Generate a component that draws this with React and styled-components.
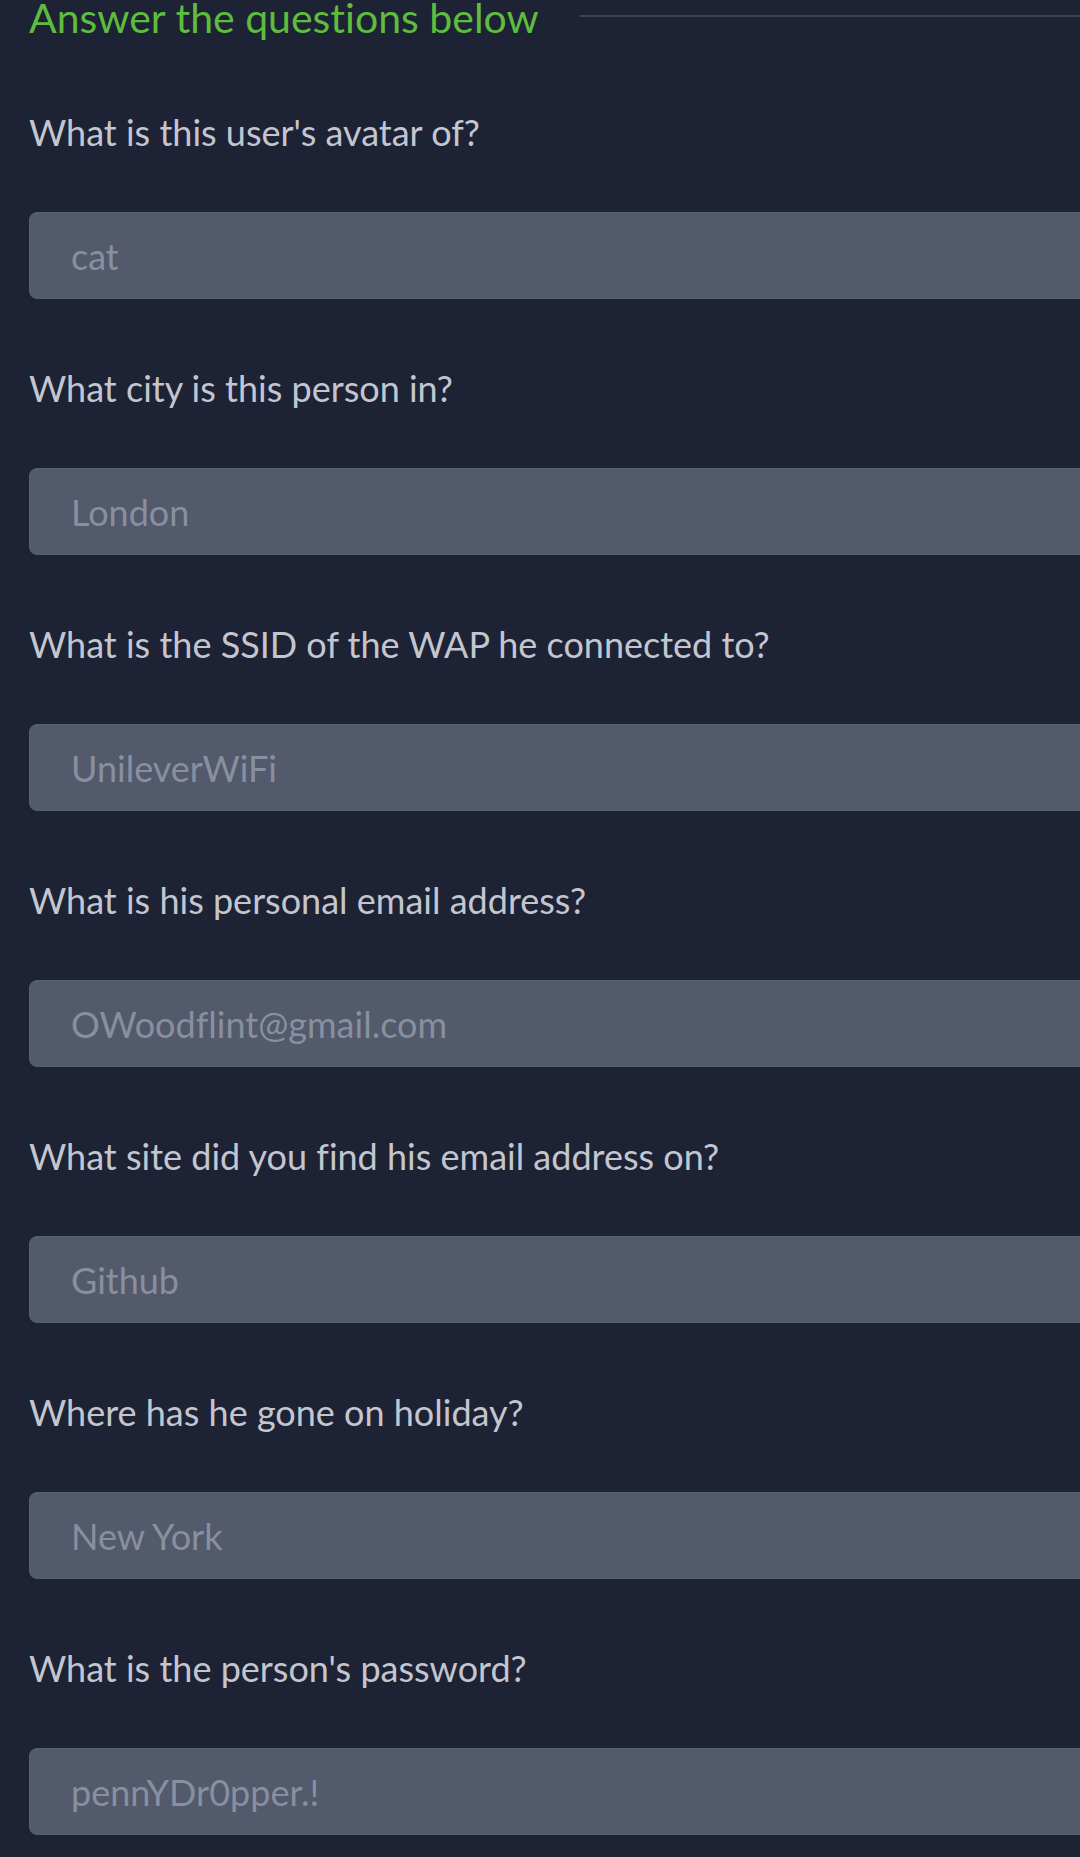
import React from "react"
import styled, { createGlobalStyle } from "styled-components"

const GlobalStyle = createGlobalStyle`
  html, body {
    margin: 0;
    padding: 0;
    background-color: #1e2235;
    overflow: hidden;
  }
  * {
    box-sizing: border-box;
  }
`;

const Page = styled.div`
  min-height: 1857px;
  padding-left: 29px;
  background-color: #1e2235;
  font-family: "Lato", "Noto Sans", sans-serif;
  font-variant-ligatures: none;
`;

const HeaderRow = styled.div`
  display: flex;
  align-items: center;
`;

const Heading = styled.h2`
  margin: 0;
  font-size: 41px;
  line-height: 35px;
  font-weight: 400;
  color: #5ebc3e;
  white-space: nowrap;
`;

const Rule = styled.div`
  flex: 1;
  height: 2px;
  margin-left: 41px;
  margin-bottom: 3px;
  background-color: #3d4258;
`;

const Form = styled.form`
  display: flex;
  flex-direction: column;
  padding-top: 75px;
`;

const Question = styled.div`
  display: flex;
  flex-direction: column;
  &:not(:last-child) {
    margin-bottom: 67px;
  }
`;

const Label = styled.label`
  font-size: 36px;
  line-height: 44px;
  color: #c3c6cf;
  margin-bottom: 58px;
`;

const Answer = styled.input`
  width: calc(100% + 40px);
  height: 87px;
  padding: 0 0 0 41px;
  border: 1px solid #5a6173;
  border-radius: 8px;
  background-color: #535a6b;
  color: #888fa0;
  font-family: "Lato", "Noto Sans", sans-serif;
  font-variant-ligatures: none;
  font-size: 36px;
  outline: none;
`;

const questions = [
  { q: "What is this user's avatar of?", a: "cat" },
  { q: "What city is this person in?", a: "London" },
  { q: "What is the SSID of the WAP he connected to?", a: "UnileverWiFi" },
  { q: "What is his personal email address?", a: "OWoodflint@gmail.com" },
  { q: "What site did you find his email address on?", a: "Github" },
  { q: "Where has he gone on holiday?", a: "New York" },
  { q: "What is the person's password?", a: "pennYDr0pper.!" },
];

export default function App() {
  return (
    <Page>
      <GlobalStyle />
      <HeaderRow>
        <Heading>Answer the questions below</Heading>
        <Rule />
      </HeaderRow>
      <Form onSubmit={e => e.preventDefault()}>
        {questions.map((item, i) => (
          <Question key={i}>
            <Label htmlFor={`answer-${i}`}>{item.q}</Label>
            <Answer id={`answer-${i}`} value={item.a} readOnly />
          </Question>
        ))}
      </Form>
    </Page>
  );
}
